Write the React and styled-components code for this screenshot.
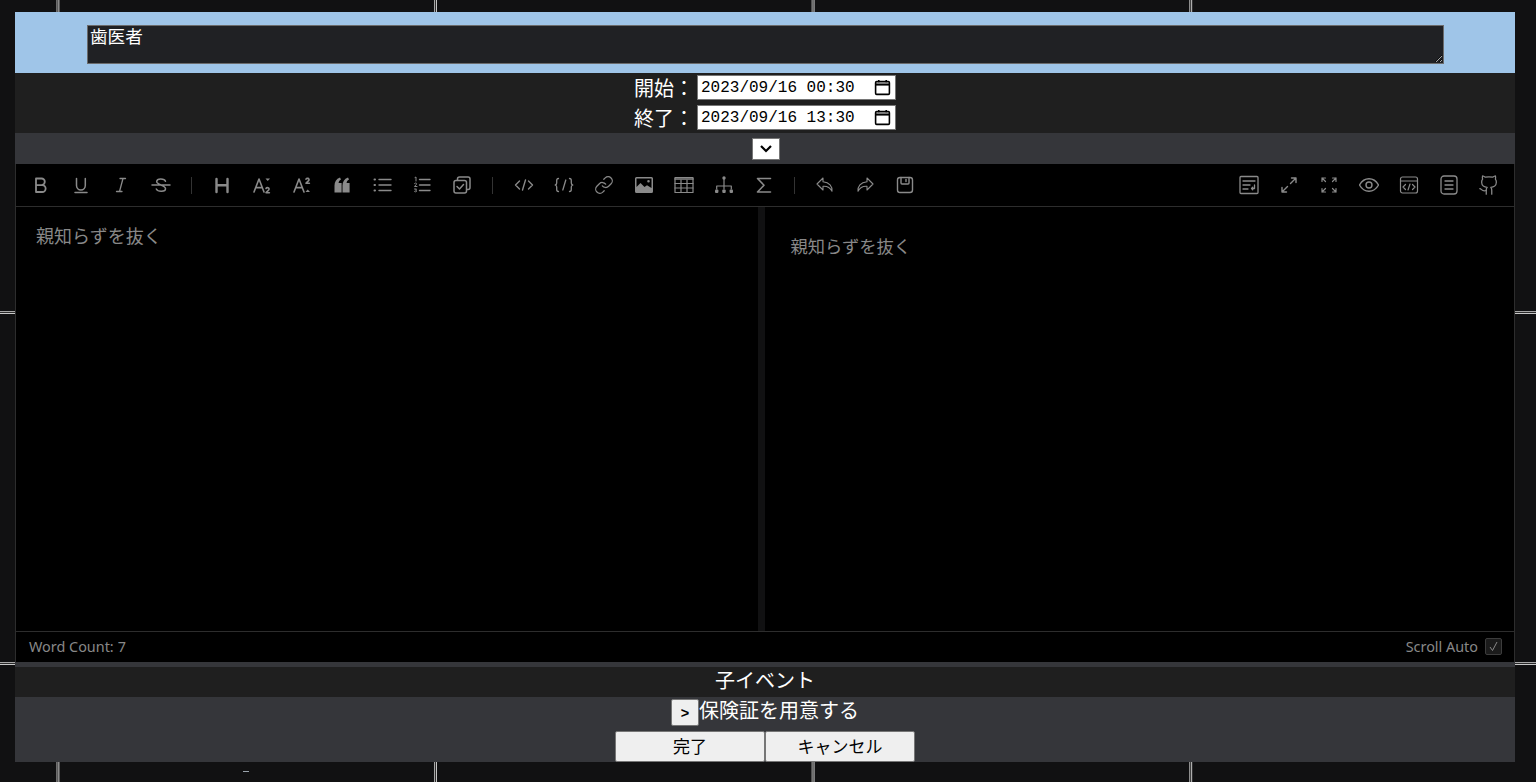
import React from 'react';
import styled, { createGlobalStyle } from 'styled-components';

const GlobalStyle = createGlobalStyle`
  * {
    box-sizing: border-box;
  }

  html,
  body {
    margin: 0;
    height: 100%;
    overflow: hidden;
  }

  body {
    background-color: #111112;
    background-image:
      linear-gradient(90deg, #a8a8a8 0 1px, #2a2a2a 1px 2px, #c8c8c8 2px 3px, transparent 3px),
      linear-gradient(180deg, #a8a8a8 0 1px, #2a2a2a 1px 2px, #c8c8c8 2px 3px, transparent 3px);
    background-size: 377.6px 100%, 100% 351px;
    background-position: 56.4px 0, 0 311px;
    font-family: "Noto Sans CJK JP", "Noto Sans", sans-serif;
  }
`;

const Page = styled.div`
  position: relative;
  height: 782px;
  padding: 12px 21px 20px 15px;
`;

const CalendarDash = styled.span`
  position: absolute;
  left: 243px;
  top: 771px;
  width: 6px;
  height: 1px;
  background: #9aa4ac;
`;

const Modal = styled.main`
  display: flex;
  flex-direction: column;
  height: 750px;
  background: #1f1f1f;
  color: #fff;
`;

const TitleBand = styled.div`
  height: 61px;
  padding-top: 13px;
  background: #9fc5e8;
`;

const TitleInput = styled.textarea`
  display: block;
  width: 1357px;
  height: 39px;
  margin: 0 0 0 72px;
  padding: 0 2px;
  background: #202124;
  border: 1px solid #6b6b6b;
  border-radius: 0;
  color: #fff;
  font: 17.6px/20px "Noto Sans CJK JP", sans-serif;
  outline: none;
`;

const DatesBand = styled.div`
  display: flex;
  flex-direction: column;
  align-items: center;
  gap: 1px;
  height: 60px;
`;

const DateRow = styled.div`
  display: flex;
  align-items: center;
  height: 29px;
  font-size: 20px;
`;

const DateLabel = styled.label`
  width: 63px;
  line-height: 25px;
`;

const DateField = styled.div`
  display: flex;
  align-items: center;
  justify-content: space-between;
  width: 199px;
  height: 25px;
  padding: 0 4px 0 3px;
  background: #fff;
  border: 1px solid #767676;
  color: #000;
  font: 16px "Liberation Mono", monospace;
`;

const ToggleBand = styled.div`
  display: flex;
  justify-content: center;
  height: 31px;
  padding: 5px 0 0 2px;
  background: #35363a;
`;

const ToggleButton = styled.button`
  display: flex;
  align-items: center;
  justify-content: center;
  width: 28px;
  height: 22px;
  padding: 0;
  background: #fff;
  border: 1px solid #767676;
`;

const Editor = styled.section`
  display: flex;
  flex-direction: column;
  height: 498px;
  background: #000;
  border: 1px solid #2d2d2d;
  border-top: 0;
  border-bottom: 0;
`;

const Toolbar = styled.div`
  display: flex;
  align-items: center;
  justify-content: space-between;
  flex: none;
  height: 43px;
  padding: 0 5px;
  border-bottom: 1px solid #2d2d2d;
`;

const ToolGroup = styled.div`
  display: flex;
  align-items: center;
`;

const ToolButton = styled.span`
  display: flex;
  align-items: center;
  justify-content: center;
  width: 40px;
  height: 22px;
  color: #8a8a8a;
`;

const ToolDivider = styled.span`
  width: 1px;
  height: 17px;
  margin: 0 ${({ $wide }) => ($wide ? 11 : 10)}px 0 10px;
  background: #333;
`;

const Panes = styled.div`
  display: grid;
  grid-template-columns: 742px 7px 1fr;
  flex: 1;
  min-height: 0;
`;

const SourcePane = styled.div`
  padding: 15px 20px;
  color: #888;
  font-size: 18px;
  line-height: 26px;
`;

const PaneDivider = styled.div`
  background: #111112;
`;

const PreviewPane = styled.div`
  padding: 26px 25.500px;
  color: #888;
  font-size: 17.3px;
  line-height: 26px;
`;

const EditorFooter = styled.div`
  display: flex;
  align-items: center;
  justify-content: space-between;
  flex: none;
  height: 31px;
  padding: 0 12px 2px 13px;
  border-top: 1px solid #2d2d2d;
  color: #888;
  font: 14.4px "Noto Sans", sans-serif;
`;

const WordCount = styled.span`
  display: flex;
  gap: 4px;
`;

const ScrollAuto = styled.label`
  display: flex;
  align-items: center;
  gap: 7px;
`;

const CheckBox = styled.span`
  display: flex;
  align-items: center;
  justify-content: center;
  width: 17px;
  height: 17px;
  background: #1b1b1b;
  border: 1px solid #3c3c3c;
  border-radius: 2px;
  color: #888;
`;

const SectionRule = styled.div`
  flex: none;
  height: 5px;
  background: #35363a;
`;

const ChildHeading = styled.div`
  flex: none;
  height: 30px;
  font-size: 20px;
  line-height: 25px;
  text-align: center;
`;

const ChildBand = styled.div`
  display: flex;
  flex: 1;
  flex-direction: column;
  align-items: center;
  background: #35363a;
`;

const ChildRow = styled.div`
  display: flex;
  align-items: flex-start;
  height: 34px;
  padding-top: 2px;
  font-size: 20px;
  line-height: 22px;
`;

const ExpandButton = styled.button`
  width: 28px;
  height: 27px;
  padding: 0;
  background: #efefef;
  border: 1px solid #767676;
  border-radius: 2px;
  color: #000;
  font: 700 14.5px "Liberation Sans", sans-serif;
`;

const ActionRow = styled.div`
  display: flex;
`;

const ActionButton = styled.button`
  width: 150px;
  height: 31px;
  padding: 0 0 3px;
  background: #efefef;
  border: 1px solid #767676;
  border-radius: 2px;
  color: #000;
  font: 17px "Noto Sans CJK JP", sans-serif;
`;

const Icon = ({ size = 20, box = 20, sw = 1.4, children }) => (
  <svg
    width={size}
    height={size}
    viewBox={`0 0 ${box} ${box}`}
    fill="none"
    stroke="currentColor"
    strokeWidth={sw}
    strokeLinecap="round"
    strokeLinejoin="round"
  >
    {children}
  </svg>
);

const solid = { fill: 'currentColor', stroke: 'none' };

const leftTools = [
  [
    <Icon sw={1.8}><path d="M5 3.5h5.5a3.3 3.3 0 0 1 0 6.6H5zM5 10.1h6.200a3.400 3.400 0 0 1 0 6.900H5z" /></Icon>,
    <Icon sw={1.5}><path d="M5.500 3.500v7a4.400 4.400 0 0 0 8.800 0v-7M4 17.500h12" /></Icon>,
    <Icon sw={1.3}><path d="M9 3.500h5.500M5.500 16.500H11M12 3.500l-3.500 13" /></Icon>,
    <Icon sw={1.5}><path d="M1 10h18M14.500 6.200c-1-2.600-8.400-3.200-8.800.2-.4 3.600 8.800 3.600 8.800 7.400 0 3.200-7.600 3.400-9.200.2" /></Icon>,
  ],
  [
    <Icon sw={2.400}><path d="M4.500 4v13M15.500 4v13M4.500 10.300h11" /></Icon>,
    <Icon sw={1.6}>
      <path d="M2 17 7 4l5 13M3.800 12.600h6.400" />
      <path {...solid} d="M13.500 3.500h4.500L15.700 6z" />
      <path d="M14 13.500c.8-1.400 3.400-1 3 .8-.2 1-2 2-3 3.400h3.400" />
    </Icon>,
    <Icon sw={1.6}>
      <path d="M2 17 7 4l5 13M3.800 12.600h6.400" />
      <path d="M14 4.200c.8-1.400 3.400-1 3 .8-.2 1-2 2-3 3.200h3.400" />
      <path {...solid} d="M13.500 17h4.500l-2.300-2.600z" />
    </Icon>,
    <Icon>
      <path {...solid} d="M2.500 17.500v-7C2.500 7 4.200 4 8 2.600l1 1.800C7.400 5.300 6.700 6.300 6.600 8h3v9.500zM10.500 17.500v-7c0-3.500 1.700-6.500 5.500-7.900l1 1.800c-1.600.9-2.300 1.900-2.400 3.600h3v9.500z" />
    </Icon>,
    <Icon>
      <path d="M7 4.500h12M7 10h12M7 15.500h12" />
      <path strokeWidth="2" d="M2.500 4.500h.5M2.500 10h.5M2.500 15.500h.5" />
    </Icon>,
    <Icon>
      <path d="M7.500 4.500h10.500M7.500 10h10.500M7.500 15.500h10.500" />
      <path strokeWidth="1" d="M3 2.500l1-.5v4M2.500 8.500c1-1 2.500-.5 2 .7L2.500 11.500h2.500M2.500 14h2l-1 1.300c1 0 1.500.5 1 1.200-.4.500-1.400.5-2 0" />
    </Icon>,
    <Icon sw={1.5}>
      <rect x="5.500" y="2" width="12.500" height="12.500" rx="2" />
      <rect x="2" y="5.500" width="12.500" height="12.500" rx="2" fill="#000" />
      <path d="M5 11.500l2.500 2.500 4-4.500" />
    </Icon>,
  ],
  [
    <Icon>
      <path d="M5.500 6 1.500 10l4 4M14.500 6l4 4-4 4M11.500 5l-3 10" />
    </Icon>,
    <Icon sw={1.3}>
      <path d="M4.500 3.500c-1.500 0-1.800.8-1.800 2v2.500c0 1-.6 1.700-1.500 2 .9.300 1.500 1 1.500 2v2.500c0 1.200.3 2 1.800 2M15.500 3.500c1.500 0 1.800.8 1.800 2v2.500c0 1 .6 1.700 1.500 2-.9.300-1.500 1-1.500 2v2.500c0 1.200-.3 2-1.800 2M11.800 5l-3 10" />
    </Icon>,
    <Icon size={20} box={24} sw={1.5}>
      <path d="M10 13a5 5 0 0 0 7.540.54l3-3a5 5 0 0 0-7.070-7.070l-1.720 1.710" />
      <path d="M14 11a5 5 0 0 0-7.540-.54l-3 3a5 5 0 0 0 7.070 7.070l1.710-1.710" />
    </Icon>,
    <Icon>
      <path {...solid} fillRule="evenodd" d="M2.500 2h15a1.500 1.500 0 0 1 1.500 1.500v13a1.500 1.500 0 0 1-1.500 1.500h-15A1.500 1.500 0 0 1 1 16.500v-13A1.500 1.500 0 0 1 2.500 2zM2.500 3.500v8.500L6.500 8l4 4 2.500-1.800 4.500 2.800V3.500zM14.500 5a1.300 1.300 0 1 1 0 2.600 1.300 1.300 0 0 1 0-2.600z" />
    </Icon>,
    <Icon sw={1.2}>
      <rect x="1" y="2.500" width="18" height="15" />
      <path strokeWidth="1.600" d="M1 4h18" />
      <path d="M1 8.500h18M1 13h18M7 5v12.500M13 5v12.500" />
    </Icon>,
    <Icon sw={1.2}>
      <circle {...solid} cx="10" cy="3" r="1.700" />
      <rect {...solid} x="1" y="14.500" width="3.400" height="3.400" rx="1" />
      <rect {...solid} x="8.300" y="14.500" width="3.400" height="3.400" rx="1" />
      <rect {...solid} x="15.600" y="14.500" width="3.400" height="3.400" rx="1" />
      <path d="M10 4v10M2.700 14v-3h14.600v3" />
    </Icon>,
    <Icon sw={1.6}><path d="M16.500 3.500H3.500L10 10.200 3.500 17h13" /></Icon>,
  ],
  [
    <Icon sw={1.1}><path d="M8 3 2 9l6 6v-3.700c4-.3 7 1 9 5 .4-5-2.500-9-9-9.500z" /></Icon>,
    <Icon sw={1.1}><path d="m12 3 6 6-6 6v-3.700c-4-.3-7 1-9 5-.4-5 2.500-9 9-9.500z" /></Icon>,
    <Icon>
      <rect x="2.500" y="2.500" width="15" height="15" rx="2.500" />
      <path d="M6 2.500v5.500a1 1 0 0 0 1 1h6a1 1 0 0 0 1-1V2.500" />
      <path d="M11 4.500v2" />
    </Icon>,
  ],
];

const rightTools = [
  <Icon sw={1.3}>
    <rect x="1" y="1.500" width="18" height="17" rx="1" />
    <path d="M4 6h12M4 10h7M4 14h5M15.500 10v3.500h-3l1.200-1.200m-1.200 1.200 1.200 1.200" />
  </Icon>,
  <Icon>
    <path d="M3 17 8.500 11.500M11.500 8.500 17 3M12.500 3H17v4.500M3 12.500V17h4.500" />
  </Icon>,
  <Icon sw={1.2}>
    <path d="M3 6.500V3h3.500M3 3l3.500 3.500M17 6.500V3h-3.500M17 3l-3.500 3.500M3 13.500V17h3.500M3 17l3.500-3.500M17 13.500V17h-3.500M17 17l-3.500-3.500" />
  </Icon>,
  <Icon sw={1.4}>
    <path d="M.500 10C2.800 6 6.200 3.800 10 3.800s7.200 2.200 9.500 6.200c-2.300 4-5.700 6.200-9.500 6.200S2.800 14 .500 10z" />
    <circle cx="10" cy="10" r="3" />
  </Icon>,
  <Icon sw={1.2}>
    <rect x="1.500" y="2" width="17" height="16" rx="2" />
    <path d="M1.500 6h17M6.500 9.500l-2.500 2.500 2.500 2.500M13.500 9.500l2.500 2.500-2.500 2.500M11 9l-2 6" />
  </Icon>,
  <Icon sw={1.3}>
    <rect x="2" y="1" width="16" height="18" rx="3" />
    <path d="M6 6h8M6 10h8M6 14h8" />
  </Icon>,
  <Icon size={22} box={24} sw={1.4}>
    <path d="M15 22v-4a4.800 4.800 0 0 0-1-3.500c3 0 6-2 6-5.500.080-1.250-.270-2.480-1-3.500.280-1.150.280-2.350 0-3.500 0 0-1 0-3 1.500-2.640-.500-5.360-.500-8 0C6 2 5 2 5 2c-.300 1.150-.300 2.350 0 3.500A5.400 5.400 0 0 0 4 9c0 3.500 3 5.500 6 5.500-.390.490-.680 1.050-.850 1.650-.170.600-.220 1.230-.150 1.850v4" />
    <path d="M9 18c-4.510 2-5-2-7-2" />
  </Icon>,
];

const CalendarIcon = () => (
  <svg width="17" height="17" viewBox="0 0 16 16" fill="none" stroke="#000">
    <rect x="1.500" y="2.500" width="13" height="12" strokeWidth="1.500" rx="1" />
    <path d="M1 5.200h14" strokeWidth="2" />
    <path d="M4.500 1v2M11.500 1v2" strokeWidth="1.500" />
  </svg>
);

const dates = [
  { label: '開始：', value: '2023/09/16 00:30' },
  { label: '終了：', value: '2023/09/16 13:30' },
];

const App = () => (
  <>
    <GlobalStyle />
    <Page>
      <Modal>
        <TitleBand>
          <TitleInput defaultValue="歯医者" />
        </TitleBand>
        <DatesBand>
          {dates.map((d) => (
            <DateRow key={d.label}>
              <DateLabel>{d.label}</DateLabel>
              <DateField>
                <span>{d.value}</span>
                <CalendarIcon />
              </DateField>
            </DateRow>
          ))}
        </DatesBand>
        <ToggleBand>
          <ToggleButton aria-label="open">
            <svg width="12" height="8" viewBox="0 0 12 8" fill="none" stroke="#000" strokeWidth="2.200">
              <path d="m1 1 5 5 5-5" />
            </svg>
          </ToggleButton>
        </ToggleBand>
        <Editor>
          <Toolbar>
            <ToolGroup>
              {leftTools.map((group, i) => (
                <React.Fragment key={i}>
                  {i > 0 && <ToolDivider $wide={i === 2} />}
                  {group.map((icon, j) => (
                    <ToolButton key={j}>{icon}</ToolButton>
                  ))}
                </React.Fragment>
              ))}
            </ToolGroup>
            <ToolGroup>
              {rightTools.map((icon, i) => (
                <ToolButton key={i}>{icon}</ToolButton>
              ))}
            </ToolGroup>
          </Toolbar>
          <Panes>
            <SourcePane>親知らずを抜く</SourcePane>
            <PaneDivider />
            <PreviewPane>親知らずを抜く</PreviewPane>
          </Panes>
          <EditorFooter>
            <WordCount>
              <span>Word Count:</span>
              <span>7</span>
            </WordCount>
            <ScrollAuto>
              Scroll Auto
              <CheckBox>
                <svg width="11" height="11" viewBox="0 0 11 11" fill="none" stroke="currentColor">
                  <path d="m2 6 2.500 3.500L9 1" />
                </svg>
              </CheckBox>
            </ScrollAuto>
          </EditorFooter>
        </Editor>
        <SectionRule />
        <ChildHeading>子イベント</ChildHeading>
        <ChildBand>
          <ChildRow>
            <ExpandButton>&gt;</ExpandButton>
            保険証を用意する
          </ChildRow>
          <ActionRow>
            <ActionButton>完了</ActionButton>
            <ActionButton>キャンセル</ActionButton>
          </ActionRow>
        </ChildBand>
      </Modal>
      <CalendarDash />
    </Page>
  </>
);

export default App;
